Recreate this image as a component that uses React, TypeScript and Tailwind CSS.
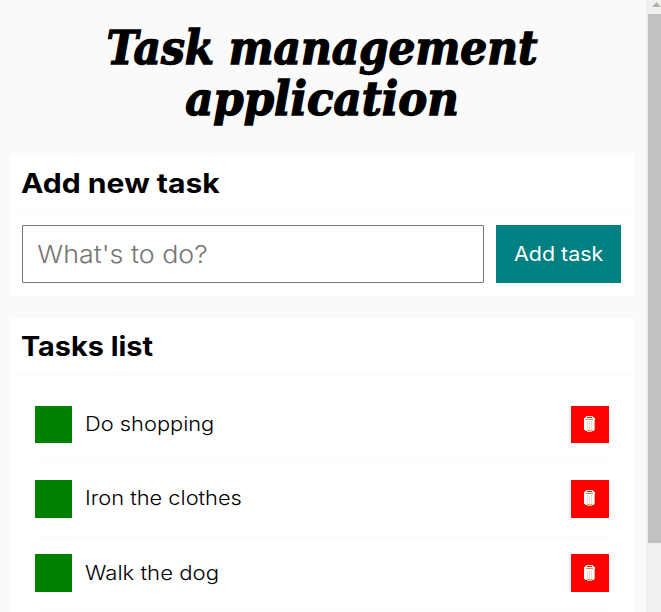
const tasks = [
  { name: 'Do shopping', row: 'h-[74px] pb-[18px]', box: 'h-[37px]', icon: 'pt-[10px]', text: 'scale-x-[1.12] leading-[37px]' },
  { name: 'Iron the clothes', row: 'h-[75px] pb-[18px]', box: 'h-[38px]', icon: 'pt-[10px]', text: 'scale-x-[1.12] leading-[39px]' },
  { name: 'Walk the dog', row: 'h-[74px] pb-[18px]', box: 'h-[38px]', icon: 'pt-[11px]', text: 'scale-x-[1.135] leading-[37px]' },
];

function BinIcon() {
  return (
    <svg width="11" height="16" viewBox="0 0 11 16" shapeRendering="crispEdges" className="block">
      <path d="M0 2H1V1H2V0H9V1H10V2H11V14H10V15H8V16H3V15H1V14H0Z" fill="#fff" />
      <path d="M2 0H9V1H2Z M1 1H3V2H1Z M8 1H10V2H8Z" fill="#ffe3d0" />
      <path d="M3 1H8V2H3Z" fill="#d92814" />
      <path d="M2 3H9V4H2Z" fill="#d98a55" />
      <path d="M3 5H4V14H3Z M5 5H6V14H5Z M7 5H8V14H7Z" fill="#ffd5d0" />
      <path d="M10 4H11V14H10Z" fill="#efb878" />
      <path d="M3 14H8V15H3Z" fill="#e8a850" />
      <path d="M3 15H8V16H3Z" fill="#ffb795" />
    </svg>
  );
}

export default function App() {
  return (
    <div className="flex h-[612px] w-[661px] overflow-hidden bg-[#fafafa] font-['Inter','Liberation_Sans',sans-serif] text-black">
      <main className="w-[646px] shrink-0 pl-[10px] pr-[12px]">
        <h1 className="h-[155px] pt-[23px] text-center font-['DejaVu_Serif_Condensed','DejaVu_Serif',serif] text-[46px] font-bold italic leading-[51px] [-webkit-text-stroke:1.3px_black]">
          <span className="block scale-x-[1.022] whitespace-nowrap">Task management</span>
          <span className="block scale-x-[1.05] whitespace-nowrap">application</span>
        </h1>
        <section className="h-[141px] bg-white">
          <h2 className="h-[58px] border-b border-[#fafafa] pl-[11px] text-[27px] font-bold leading-[57px]">
            <span className="inline-block origin-left scale-x-[1.115]">Add new task</span>
          </h2>
          <form className="flex gap-3 px-3 pt-3" onSubmit={(e) => e.preventDefault()}>
            <div className="h-[58px] w-[462px] overflow-hidden rounded-[1px] border border-[#767676] bg-white">
              <input
                placeholder="What's to do?"
                className="h-[56px] w-[410px] origin-left scale-x-[1.095] bg-transparent pl-[13px] text-[24.5px] font-light outline-none placeholder:text-[#757575]"
              />
            </div>
            <button className="h-[58px] w-[125px] whitespace-nowrap bg-[#008080] text-[20px] text-white">
              <span className="inline-block scale-x-[1.07]">Add task</span>
            </button>
          </form>
        </section>
        <section className="mt-[22px] h-[400px] bg-white">
          <h2 className="h-[58px] border-b border-[#fafafa] pl-[11px] text-[27px] font-bold leading-[57px]">
            <span className="inline-block origin-left scale-x-[1.067]">Tasks list</span>
          </h2>
          <ul className="px-[25px] pt-3">
            {tasks.map((task) => (
              <li key={task.name} className={`flex items-end border-b border-[#fafafa] ${task.row}`}>
                <button aria-label="Toggle" className={`w-[37px] bg-[#008000] ${task.box}`} />
                <span className={`ml-[13px] flex-1 origin-left whitespace-nowrap text-[19.5px] font-light ${task.text}`}>{task.name}</span>
                <button aria-label="Remove" className={`flex w-[38px] items-start bg-[#ff0000] pl-[13px] ${task.icon} ${task.box}`}>
                  <BinIcon />
                </button>
              </li>
            ))}
          </ul>
        </section>
      </main>
      <aside className="flex w-[15px] shrink-0 flex-col items-end bg-[#f0f0f0]">
        <svg width="9" height="14" viewBox="0 0 9 14" className="block">
          <path d="M0 7 L4.5 2 L9 7Z" fill="#b5b1a4" />
        </svg>
        <div className="h-[529px] w-[13px] bg-[#c1c1c1]" />
      </aside>
    </div>
  );
}
